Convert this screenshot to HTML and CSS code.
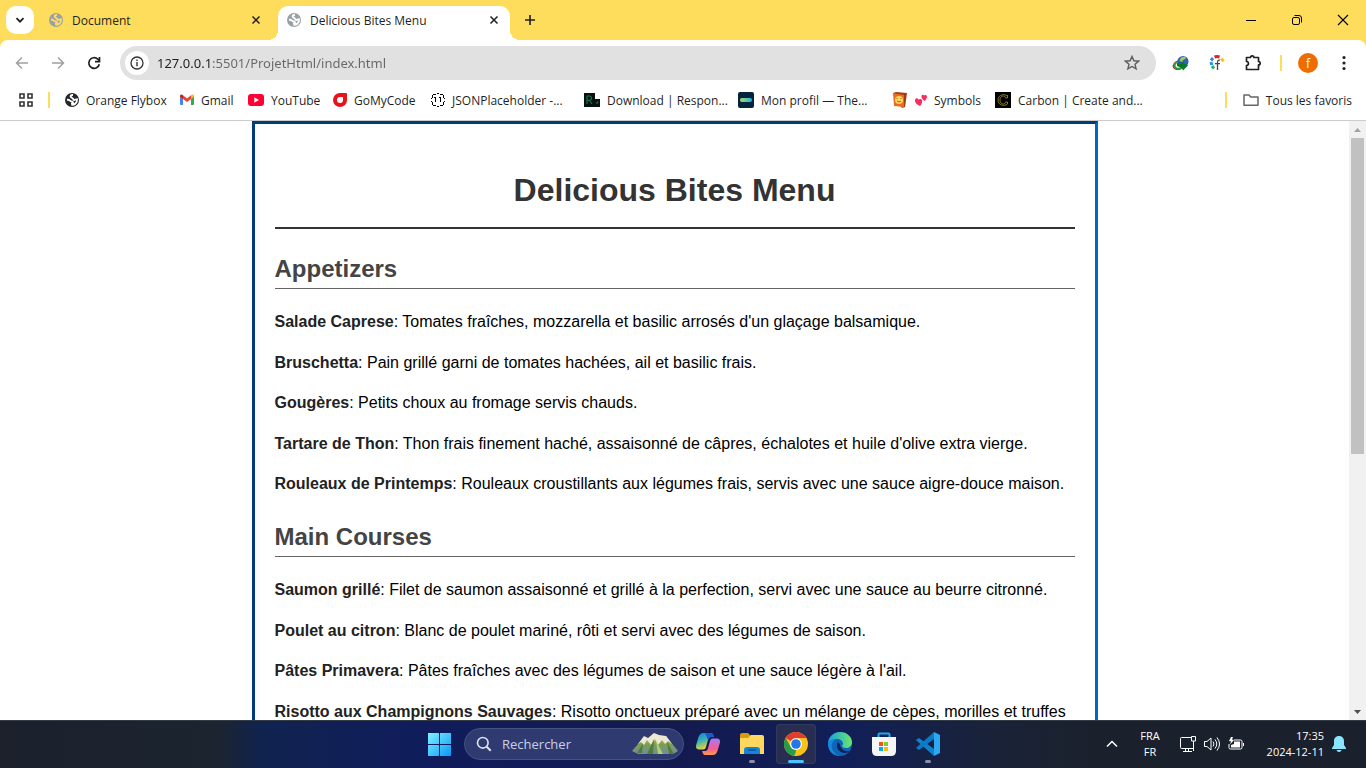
FILE: index.html
```html
<!DOCTYPE html>
<html lang="fr">
<head>
<meta charset="utf-8">
<meta name="viewport" content="width=device-width, initial-scale=1">
<title>Delicious Bites Menu</title>
<link rel="stylesheet" href="styles.css">
</head>
<body>
<svg class="defs" aria-hidden="true">
  <symbol id="globe" viewBox="0 0 14 14">
    <circle cx="7" cy="7" r="7" fill="currentColor"/>
    <path d="M8 2C5.800 1.800 5 3 6 4.200c.8 1 2 .8 2.200 2 .1.900 1.200 1 2 .4l1.800-.2c.2 1.800-.5 3.200-1.500 4.100-.9.900-2 1.300-3.300 1.300L7 10.500c1.300-.2 1.200-1.400.2-1.900C6.200 8.200 5.400 8.300 4.800 7.500 4.200 6.800 3.200 6.700 2 6.800" fill="none" stroke="var(--land)" stroke-width="1.900"/>
  </symbol>
  <symbol id="close" viewBox="0 0 10 10"><path d="M1.500 1.500l7 7M8.500 1.500l-7 7" stroke="currentColor" stroke-width="1.500"/></symbol>
</svg>

<header class="browser">
  <div class="tabstrip">
    <button class="tab-search" aria-label="Rechercher des onglets"><svg width="10" height="10" viewBox="0 0 10 10"><path d="M1.500 3.200L5 6.700l3.500-3.500" fill="none" stroke="#1f1f1f" stroke-width="1.800"/></svg></button>
    <div class="tab">
      <svg class="favicon" width="14" height="14"><use href="#globe"/></svg>
      <span class="tab-title">Document</span>
      <button class="icon-button" aria-label="Fermer Document"><svg width="10" height="10"><use href="#close"/></svg></button>
    </div>
    <div class="tab tab-active">
      <svg class="favicon" width="14" height="14"><use href="#globe"/></svg>
      <span class="tab-title">Delicious Bites Menu</span>
      <button class="icon-button" aria-label="Fermer Delicious Bites Menu"><svg width="10" height="10"><use href="#close"/></svg></button>
    </div>
    <button class="new-tab" aria-label="Nouvel onglet"><svg width="12" height="12" viewBox="0 0 12 12"><path d="M6 1v10M1 6h10" stroke="#1f1f1f" stroke-width="1.600"/></svg></button>
    <div class="window-controls">
      <button aria-label="Réduire"><svg width="12" height="12" viewBox="0 0 12 12"><path d="M1 6.500h10" stroke="#000"/></svg></button>
      <button aria-label="Niveau inférieur"><svg width="12" height="12" viewBox="0 0 12 12" fill="none" stroke="#000"><rect x="1.500" y="3.500" width="7" height="7" rx="1.500"/><path d="M3.500 1.500H8A2.500 2.500 0 0 1 10.500 4v4.500"/></svg></button>
      <button aria-label="Fermer"><svg width="12" height="12" viewBox="0 0 12 12"><path d="M1 1l10 10M11 1L1 11" stroke="#000" stroke-width="1.100"/></svg></button>
    </div>
  </div>

  <div class="toolbar">
    <button class="nav-button nav-off" aria-label="Retour"><svg width="14" height="14" viewBox="0 0 14 14" fill="none" stroke="currentColor" stroke-width="1.500"><path d="M13 7H2M7 1.500L1.500 7 7 12.500"/></svg></button>
    <button class="nav-button nav-off" aria-label="Avancer"><svg width="14" height="14" viewBox="0 0 14 14" fill="none" stroke="currentColor" stroke-width="1.500"><path d="M1 7h11M7 1.500L12.500 7 7 12.500"/></svg></button>
    <button class="nav-button" aria-label="Actualiser"><svg width="14" height="14" viewBox="0 0 14 14" fill="none" stroke="currentColor" stroke-width="1.700"><path d="M12.300 8.200A5.300 5.300 0 1 1 10.800 3.200L12.500 5"/><path d="M12.500 1v4.600H8"/></svg></button>
    <div class="omnibox">
      <button class="site-info" aria-label="Informations sur le site"><svg width="14" height="14" viewBox="0 0 14 14" fill="none" stroke="#333"><circle cx="7" cy="7" r="6" stroke-width="1.300"/><path d="M7 6v4.200M7 3.600v1.500" stroke-width="1.400"/></svg></button>
      <input class="url" type="text" aria-label="Adresse" value="127.0.0.1:5501/ProjetHtml/index.html">
      <button class="icon-button" aria-label="Ajouter aux favoris"><svg width="16" height="16" viewBox="0 0 16 16"><path d="M8 1.500l1.900 4.300 4.700.4-3.600 3.100 1.100 4.600L8 11.500l-4.100 2.400L5 9.300 1.400 6.200l4.700-.4z" fill="none" stroke="#5c5c5c" stroke-width="1.400"/></svg></button>
    </div>
    <div class="extensions">
      <button class="ext" aria-label="Internet Download Manager"><svg width="18" height="18" viewBox="0 0 18 18"><ellipse cx="7" cy="11" rx="5.800" ry="4" fill="none" stroke="#cf2b2b" stroke-width="1.500" transform="rotate(-22 7 11)"/><ellipse cx="8" cy="10.500" rx="5.600" ry="3.600" fill="#fff" stroke="#25a244" stroke-width="2" transform="rotate(-22 8 10.500)"/><circle cx="11" cy="7.500" r="5.500" fill="#2b62b4"/><path d="M9 3.500l4-1 1 2-3 1.500-1 2-2.500-1z" fill="#a8c957"/><path d="M5 9l4 .5V7.500l7 4-5 5-1-2.500-5-2z" fill="#087a22"/></svg></button>
      <button class="ext" aria-label="Extension de polices"><svg width="18" height="18" viewBox="0 0 18 18" fill="none" stroke-width="3"><path d="M6.500 3a7 7 0 0 1 5 0" stroke="#e51d25"/><path d="M13.500 4.500l2 3" stroke="#f4c321"/><path d="M5 4L3 6.500" stroke="#3b80e4"/><path d="M3 8l.7 3" stroke="#2196f3"/><path d="M4 12l2 2.500" stroke="#25b568"/><path d="M12 6.200c-2-.7-2.500 1-2.500 2.500V16M7 9.700h5" stroke="#55453c" stroke-width="1.300"/></svg></button>
      <button class="ext" aria-label="Extensions"><svg width="18" height="18" viewBox="0 0 18 18"><path d="M2.500 3.500h4a1.700 1.700 0 0 1 3.400 0h4.600v4a1.700 1.700 0 0 1 0 3.400v4.600h-12v-4c2.600-.3 2.600-3.800 0-4z" fill="none" stroke="#222" stroke-width="1.700" stroke-linejoin="round"/></svg></button>
      <span class="divider"></span>
      <button class="avatar" aria-label="Profil">f</button>
      <button class="ext" aria-label="Menu"><svg width="18" height="18" viewBox="0 0 18 18" fill="#222"><circle cx="9" cy="3.500" r="1.600"/><circle cx="9" cy="9" r="1.600"/><circle cx="9" cy="14.500" r="1.600"/></svg></button>
    </div>
  </div>

  <nav class="bookmarks" aria-label="Favoris">
    <button class="apps" aria-label="Applications"><svg width="14" height="14" viewBox="0 0 14 14" fill="none" stroke="#333" stroke-width="1.600"><path d="M1 1h4v4H1zM9 1h4v4H9zM1 9h4v4H1zM9 9h4v4H9z"/></svg></button>
    <span class="divider"></span>
    <div class="bookmark-list">
      <a class="bookmark" href="#orange"><svg class="dark-globe" width="14" height="14"><use href="#globe"/></svg>Orange Flybox</a>
      <a class="bookmark" href="#gmail"><svg width="14" height="12" viewBox="0 0 14 12"><path d="M0 2.200l3 2.200V11H1a1 1 0 0 1-1-1z" fill="#4285f4"/><path d="M14 2.200l-3 2.200V11h2a1 1 0 0 0 1-1z" fill="#34a853"/><path d="M3 1.200l4 3.200 4-3.200v3.800L7 8 3 5z" fill="#ea4335"/><path d="M0 2C0 .2 1.700-.1 3 1.200V5L0 2.700z" fill="#c5221f"/><path d="M14 2c0-1.800-1.700-2.100-3-.8V5l3-2.300z" fill="#fbbc04"/></svg>Gmail</a>
      <a class="bookmark" href="#youtube"><svg width="16" height="12" viewBox="0 0 16 12"><rect width="16" height="12" rx="3" fill="#f03"/><path d="M6.300 3.300v5.400L11 6z" fill="#fff"/></svg>YouTube</a>
      <a class="bookmark" href="#gomycode"><svg width="14" height="14" viewBox="0 0 14 14"><path d="M7 0h6a1 1 0 0 1 1 1v6A7 7 0 1 1 7 0z" fill="#e9111c"/><path d="M7 4h3v3a3 3 0 1 1-3-3z" fill="#fff"/></svg>GoMyCode</a>
      <a class="bookmark" href="#json"><svg width="14" height="14" viewBox="0 0 14 14" fill="#000" shape-rendering="crispEdges"><path d="M2 1h3v1H2zM9 1h3v1H9zM6 0h2v1H6zM1 2h1v3H1zM12 2h1v3h-1zM0 5h1v1H0zM13 5h1v1h-1zM0 8h1v1H0zM13 8h1v1h-1zM1 9h1v3H1zM12 9h1v3h-1zM2 12h3v1H2zM9 12h3v1H9zM6 13h2v1H6zM3 4h2v1H3zM4 5h1v4H4zM8 4h2v1H8zM9 5h1v4H9z"/></svg>JSONPlaceholder -...</a>
      <a class="bookmark" href="#responsively"><svg width="16" height="14" viewBox="0 0 16 14"><path d="M0 0h11v14H0zM11 6h5v8h-5z" fill="#07130f"/><path d="M3 11V3h2.500a2 2 0 0 1 0 4.300H3M5.500 7.300L8 11M13 11V9h1.500" fill="none" stroke="#168765"/></svg>Download | Respon...</a>
      <a class="bookmark" href="#profil"><svg width="16" height="16" viewBox="0 0 16 16"><defs><linearGradient id="odin"><stop stop-color="#b8d55d"/><stop offset="1" stop-color="#11b5ee"/></linearGradient></defs><rect width="16" height="16" rx="2" fill="#04233f"/><rect x="2" y="6" width="12" height="4" rx="2" fill="url(#odin)"/></svg>Mon profil — The...</a>
      <a class="bookmark" href="#symbols"><svg width="16" height="16" viewBox="0 0 16 16"><path d="M1 1l3-1 11 1-2 14-3 1z" fill="#a33a12"/><path d="M1 1l11 2v12L2 14z" fill="#ec6b23"/><circle cx="7" cy="8" r="4" fill="#ffd45a"/><path d="M5 6v1M9 6v1M5 9q2 2 4 0" fill="none" stroke="#a8671d"/></svg><svg width="12" height="12" viewBox="0 0 12 12" fill="#fa2c60"><path d="M5 12C1 10.500-1 7 .3 5.200c1-1.500 2.900-.8 3.200.5.800-1 3-1 3.500.5.600 1.800-.5 4.100-2 5.800z"/><path d="M9.700 7C7 5.500 5.800 3 6.800 1.300c.7-1 2.200-.7 2.300.3.800-.9 2.500-.6 2.800.6.400 1.500-.9 3.400-2.200 4.800z"/></svg>Symbols</a>
      <a class="bookmark" href="#carbon"><svg width="16" height="16" viewBox="0 0 16 16"><path d="M0 0h16v16H0z" fill="#000"/><path d="M12.500 3v3h-2c-.2-3-5.500-2.800-5.500 2s5.300 5 5.500 2h2v2c-3 2.500-9.500 1.500-9.500-4s6.500-6.500 9.500-4" fill="none" stroke="#8c7c22"/></svg>Carbon | Create and...</a>
    </div>
    <div class="all-bookmarks"><span class="divider"></span><button class="bookmark"><svg width="16" height="12" viewBox="0 0 16 12"><path d="M1 1h5l1.700 2H15v8.200H1z" fill="none" stroke="#666" stroke-width="1.500" stroke-linejoin="round"/></svg>Tous les favoris</button></div>
  </nav>
</header>

<div class="viewport">
  <div class="page">
    <main class="menu">
      <h1>Delicious Bites Menu</h1>
      <section>
        <h2>Appetizers</h2>
        <p><strong>Salade Caprese</strong>: Tomates fraîches, mozzarella et basilic arrosés d'un glaçage balsamique.</p>
        <p><strong>Bruschetta</strong>: Pain grillé garni de tomates hachées, ail et basilic frais.</p>
        <p><strong>Gougères</strong>: Petits choux au fromage servis chauds.</p>
        <p><strong>Tartare de Thon</strong>: Thon frais finement haché, assaisonné de câpres, échalotes et huile d'olive extra vierge.</p>
        <p><strong>Rouleaux de Printemps</strong>: Rouleaux croustillants aux légumes frais, servis avec une sauce aigre-douce maison.</p>
      </section>
      <section>
        <h2>Main Courses</h2>
        <p><strong>Saumon grillé</strong>: Filet de saumon assaisonné et grillé à la perfection, servi avec une sauce au beurre citronné.</p>
        <p><strong>Poulet au citron</strong>: Blanc de poulet mariné, rôti et servi avec des légumes de saison.</p>
        <p><strong>Pâtes Primavera</strong>: Pâtes fraîches avec des légumes de saison et une sauce légère à l'ail.</p>
        <p><strong>Risotto aux Champignons Sauvages</strong>: Risotto onctueux préparé avec un mélange de cèpes, morilles et truffes</p>
      </section>
    </main>
  </div>
  <div class="scrollbar" aria-hidden="true">
    <svg width="17" height="17" viewBox="0 0 17 17"><path d="M5 11l3.500-4 3.500 4z" fill="#a3a3a3"/></svg>
    <div class="track"><div class="thumb"></div></div>
    <svg width="17" height="17" viewBox="0 0 17 17"><path d="M5 7l3.500 4L12 7z" fill="#505050"/></svg>
  </div>
</div>

<footer class="taskbar">
  <div class="task-center">
    <button class="task" aria-label="Démarrer"><svg width="24" height="24" viewBox="0 0 24 24"><defs><linearGradient id="win" x2="1" y2="1"><stop stop-color="#81f3ff"/><stop offset="1" stop-color="#0798f8"/></linearGradient></defs><path d="M0 1h11v11H0zM12 1h11v11H12zM0 13h11v11H0zM12 13h11v11H12z" fill="url(#win)"/></svg></button>
    <div class="search">
      <svg width="16" height="16" viewBox="0 0 16 16" fill="none" stroke="#dfe3f2" stroke-width="1.600"><circle cx="6.800" cy="6.800" r="5.300"/><path d="M10.700 10.700l4 4" stroke-width="2"/></svg>
      <input type="text" aria-label="Rechercher" placeholder="Rechercher">
      <svg width="48" height="22" viewBox="0 0 48 22"><defs><linearGradient id="hill" x2="0" y2="1"><stop stop-color="#d8dca9"/><stop offset=".5" stop-color="#7da04c"/><stop offset="1" stop-color="#758aa3"/></linearGradient></defs><path d="M1 18L13 4l5 2 6-5 5 3 6-1 12 15-5 3H7z" fill="url(#hill)"/><path d="M7 11l6-8 4 2 6-5 5 2 7 1 6 8-4-3-3 3-3-4-4 5-3-6-4 6-4-5-3 5-3-3z" fill="#eee7d1"/><path d="M23 6l-7 15h6zM12 10L6 20h5zM36 9l2 12h5z" fill="#4c7f3c"/><path d="M25 8l2 13h5z" fill="#acd46a"/></svg>
    </div>
    <button class="task" aria-label="Copilot"><svg width="24" height="24" viewBox="0 0 24 24"><defs><linearGradient id="cpa" x2=".4" y2="1"><stop stop-color="#117fd2"/><stop offset=".5" stop-color="#38b3ba"/><stop offset="1" stop-color="#f5d42b"/></linearGradient><linearGradient id="cpb" x2="0" y2="1"><stop stop-color="#a77bf4"/><stop offset=".6" stop-color="#f45d95"/><stop offset="1" stop-color="#ff9a4c"/></linearGradient></defs><path d="M7.500 1H15c1.500 0 2.300 1.500 2.800 4H15c-2 0-2.700 1.500-3.300 4l-1.700 6c-.5 1.700-1.400 2.500-3 2.500H3c-3 0-3.500-2.500-2.700-5l1.900-6.500C3 3 4.500 1 7.500 1z" fill="url(#cpa)"/><path d="M16.500 23H9c-1.500 0-2.300-1.500-2.800-4H9c2 0 2.700-1.500 3.300-4L14 9c.5-1.700 1.400-2.500 3-2.500h4c3 0 3.500 2.500 2.700 5L21.800 18c-.8 3-2.300 5-5.300 5z" fill="url(#cpb)"/><path d="M9 1h6c1.500 0 2.300 1.500 2.800 4H15c-1.500 0-2.300 1-3 3z" fill="#1c59c9"/></svg></button>
    <button class="task task-open" aria-label="Explorateur de fichiers"><svg width="24" height="24" viewBox="0 0 24 24"><path d="M0 3q0-2 2-2h6l3 3v3H0z" fill="#d99b06"/><path d="M0 6h8l3-3h11q2 0 2 2v17H0z" fill="#ffd75e"/><path d="M4 22v-4q0-3 3-3h10q3 0 3 3v4z" fill="#1683d8"/><path d="M8 18h8" stroke="#075493" stroke-width="1.500"/></svg></button>
    <button class="task task-open task-current" aria-label="Google Chrome"><svg width="24" height="24" viewBox="0 0 24 24"><circle cx="12" cy="12" r="12" fill="#fbc116"/><path d="M12 12L1.600 6A12 12 0 0 1 22.400 6z" fill="#e33b2e"/><path d="M1.600 6l5.200 9L12 18l-1 6A12 12 0 0 1 1.600 6z" fill="#269b4b"/><path d="M12 6h10.400l-5.200 9L12 24l-2-.2L16 14z" fill="#fbc116"/><circle cx="12" cy="12" r="6" fill="#fff"/><circle cx="12" cy="12" r="4.800" fill="#2477e8"/></svg></button>
    <button class="task" aria-label="Microsoft Edge"><svg width="24" height="24" viewBox="0 0 24 24"><defs><linearGradient id="edg"><stop stop-color="#199ee6"/><stop offset="1" stop-color="#69e866"/></linearGradient></defs><circle cx="12" cy="12" r="12" fill="#0d64b8"/><path d="M0 11C1 4 6 0 12 0c7 0 12 5 12 10 0 4-3 6-6 6-2 0-4-.8-4-2 0-.6 1-1 1-2.500C15 9 12 7 9 7c-4 0-7 1-9 4z" fill="url(#edg)"/><path d="M0 11c2-3 5-4 8-4-3 2-5 5-4 9s4 7 8 8C5 24 0 19 0 11z" fill="#168ad9"/><path d="M10 10c-3 5 1 11 7 11 2 0 4-1 5.500-2-3 .6-8 .2-9.700-4-.9-2-.8-3-2.800-5z" fill="#151f58"/></svg></button>
    <button class="task" aria-label="Microsoft Store"><svg width="24" height="24" viewBox="0 0 24 24"><path d="M6.500 7V2.500q0-1 1-1h9q1 0 1 1V7" fill="none" stroke="#22a7eb" stroke-width="2"/><path d="M0 5h24v14q0 5-5 5H5q-5 0-5-5z" fill="#f5f5f7"/><path d="M7 10h4v4H7z" fill="#f1511b"/><path d="M12 10h4v4h-4z" fill="#80cc28"/><path d="M7 15h4v4H7z" fill="#00adef"/><path d="M12 15h4v4h-4z" fill="#fbbc09"/></svg></button>
    <button class="task task-open" aria-label="Visual Studio Code"><svg width="24" height="24" viewBox="0 0 24 24"><path d="M0 8l3-2 15 11v7L1 9z" fill="#1281cc"/><path d="M0 16l3 2L18 7V0L1 15z" fill="#087bc4"/><path d="M18 0l6 3v18l-6 3z" fill="#2ca9f2"/></svg></button>
  </div>
  <div class="tray">
    <button class="tray-button" aria-label="Icônes cachées"><svg width="12" height="12" viewBox="0 0 12 12"><path d="M1 8.500l5-5 5 5" fill="none" stroke="#fff" stroke-width="1.500"/></svg></button>
    <button class="language">FRA<br>FR</button>
    <button class="status" aria-label="Réseau, volume, batterie">
      <svg width="16" height="16" viewBox="0 0 16 16" fill="none" stroke="#fff"><path d="M11 1.500H1.500q-1 0-1 1v9q0 1 1 1H13M5.500 12.500v3M8.500 12.500v3M3 15.500h9M11.500.5h4v4.500h-4zM13.500 5v10"/></svg>
      <svg width="16" height="16" viewBox="0 0 16 16" fill="none" stroke="#fff"><path d="M.5 5.500H3L7 2v12l-4-3.500H.5zM9 5.500q2 2.500 0 5M11 3.500q3.500 4.500 0 9M13 1.500q5 6.500 0 13"/></svg>
      <svg width="16" height="16" viewBox="0 0 16 16"><path d="M6 4h6.500q1.500 0 1.500 1.500v6q0 1.500-1.500 1.500h-10Q1 13 1 11.500V8" fill="none" stroke="#fff"/><path d="M6 5.500h6v6H3V9l3-1zM15 7h1v3h-1zM3 1L1 5l2 .5-1 3L6 4 4 3.500 5 1z" fill="#fff"/></svg>
    </button>
    <button class="clock"><time datetime="2024-12-11T17:35">17:35<br>2024-12-11</time></button>
    <button class="tray-button" aria-label="Notifications"><svg width="14" height="16" viewBox="0 0 14 16" fill="#8be5ff"><path d="M7 0c3.200 0 5 2.300 5 5v4l2 3v1H0v-1l2-3V5c0-2.700 1.800-5 5-5zM4.500 14h5Q9 16 7 16t-2.500-2z"/></svg></button>
  </div>
</footer>
</body>
</html>
```
FILE: styles.css
```css
* { box-sizing: border-box; }

body {
  margin: 0;
  height: 100vh;
  display: flex;
  flex-direction: column;
  overflow: hidden;
  background: #fff;
  font-family: "Open Sans", "Noto Sans", sans-serif;
  font-size: 12px;
  color: #1f1f1f;
}

button {
  display: flex;
  align-items: center;
  justify-content: center;
  flex: none;
  padding: 0;
  border: 0;
  background: none;
  font: inherit;
  color: inherit;
}

input { font: inherit; border: 0; padding: 0; outline: 0; background: none; min-width: 0; }
svg { display: block; flex: none; }
.defs { position: absolute; width: 0; height: 0; }

/* Browser window */
.browser { flex: none; background: #ffdd5c; border-bottom: 1px solid #ccc; }

.tabstrip { display: flex; align-items: flex-end; height: 40px; padding-left: 6px; }
.tab-search { width: 28px; height: 28px; margin-bottom: 6px; border-radius: 10px; background: #fff; }
.tab { --land: #ffdd5c; position: relative; display: flex; align-items: center; gap: 9px; flex: none; width: 232px; height: 34px; padding: 0 8px 6px 9px; border-radius: 10px 10px 0 0; }
.tab:not(.tab-active) { width: 238px; margin-left: 6px; }
.tab-active { --land: #fff; background: #fff; }
.tab:not(.tab-active) .icon-button { margin-right: 6px; }
.tab-active::before, .tab-active::after { content: ""; position: absolute; bottom: 0; width: 10px; height: 10px; }
.tab-active::before { right: 100%; background: radial-gradient(circle at 0 0, transparent 10px, #fff 10px); }
.tab-active::after { left: 100%; background: radial-gradient(circle at 100% 0, transparent 10px, #fff 10px); }
.favicon { color: #9aa0a6; }
.tab-title { flex: 1; white-space: nowrap; }
.icon-button { width: 16px; height: 16px; }
.new-tab { width: 28px; height: 28px; margin: 0 0 6px 6px; }
.window-controls { display: flex; align-self: stretch; margin-left: auto; }
.window-controls button { width: 46px; }

.toolbar { display: flex; align-items: center; height: 46px; padding: 0 13px 0 8px; background: #fff; border-radius: 8px 8px 0 0; }
.nav-button { width: 28px; height: 28px; margin-right: 8px; color: #1f1f1f; }
.nav-off { color: #a0a0a0; }
.omnibox { display: flex; align-items: center; flex: 1; height: 34px; margin-left: 4px; padding: 0 16px 0 5px; border-radius: 17px; background: #e1e1e1; }
.site-info { width: 24px; height: 24px; margin-right: 8px; border-radius: 50%; background: #fff; }
.url {
  flex: 1;
  font-family: "Noto Sans", sans-serif;
  font-size: 13px;
  background: linear-gradient(90deg, #1f1f1f 55px, #666 55px);
  -webkit-background-clip: text;
  background-clip: text;
  -webkit-text-fill-color: transparent;
}
.extensions { display: flex; align-items: center; margin-left: 16px; }
.ext { width: 18px; height: 18px; margin-right: 18px; }
.ext:last-child { margin: 0 0 0 17px; }
.divider { flex: none; width: 2px; height: 16px; background: #ffdd5c; }
.avatar { width: 20px; height: 20px; margin-left: 16px; border-radius: 50%; background: #ef6c00; color: #fff; }

.bookmarks { display: flex; align-items: center; height: 34px; padding: 0 14px 6px 19px; background: #fff; }
.apps { margin-right: 15px; }
.bookmark-list { display: grid; grid-template-columns: 115px 68px 85px 98px 153px 154px 154px 103px auto; margin: 0 auto 0 15px; }
.bookmark { display: flex; align-items: center; gap: 7px; white-space: nowrap; color: inherit; text-decoration: none; }
.dark-globe { --land: #fff; color: #222529; }
.all-bookmarks { display: flex; align-items: center; gap: 16px; }

/* Web page */
.viewport { display: flex; flex: 1; min-height: 0; }
.page { flex: 1; overflow: hidden; font-family: "Liberation Sans", Arial, sans-serif; font-size: 16px; line-height: 1.6; color: #000; }
.menu { max-width: 846px; min-height: 100vh; margin: 0 auto; padding: 20px; border: 3px solid; border-color: #003d7a #0066cc #0066cc #003d7a; }
.menu h1 { margin: 20px 0; padding-bottom: 11px; border-bottom: 2px solid #333; font-size: 32px; line-height: 52px; text-align: center; color: #333; }
.menu h2 { margin: 0 0 20px; border-bottom: 1px solid #666; font-size: 24px; line-height: 39px; color: #444; }
.menu section { margin-bottom: 20px; }
.menu p { margin: 0 0 15px; }
.menu p:last-child { margin: 0; }
.menu strong { color: #222; }

.scrollbar { display: flex; flex-direction: column; flex: none; width: 17px; background: #f1f1f1; }
.track { flex: 1; padding: 0 2px; }
.thumb { height: 56%; background: #c1c1c1; }

/* Taskbar */
.taskbar {
  display: grid;
  grid-template-columns: 1fr auto 1fr;
  align-items: center;
  flex: none;
  height: 48px;
  box-shadow: inset 0 1px #333c46;
  background: linear-gradient(90deg, #1c212c 0%, #1b2430 16%, #10234e 19%, #101d5c 30%, #131a50 50%, #111f58 62%, #192239 72%, #1b212c 80%);
  color: #fff;
}
.task-center { display: flex; align-items: center; gap: 4px; grid-column: 2; padding-left: 2px; }
.task { position: relative; width: 40px; height: 40px; border-radius: 4px; }
.task-current { background: #272e52; box-shadow: inset 0 0 0 1px #333a5b; }
.task-open::after { content: ""; position: absolute; left: 17px; bottom: 1px; width: 6px; height: 3px; border-radius: 2px; background: #8b91a8; }
.task-current::after { left: 12px; width: 16px; background: #4cc2ff; }
.search { display: flex; align-items: center; gap: 10px; width: 220px; height: 32px; padding: 0 4px 0 11px; border: 1px solid #48527f; border-radius: 16px; background: #2f3b70; }
.search input { flex: 1; font-size: 13px; color: #fff; }
.search input::placeholder { color: #cbd0e2; opacity: 1; }
.tray { display: flex; align-items: center; justify-self: end; padding-right: 20px; }
.tray-button { height: 32px; }
.language { width: 24px; margin: 0 18px 0 20px; font-size: 11px; line-height: 16px; }
.status { gap: 8px; }
.clock { width: 64px; margin: 0 8px 0 16px; justify-content: flex-end; font-size: 11px; line-height: 16px; text-align: right; }
```
